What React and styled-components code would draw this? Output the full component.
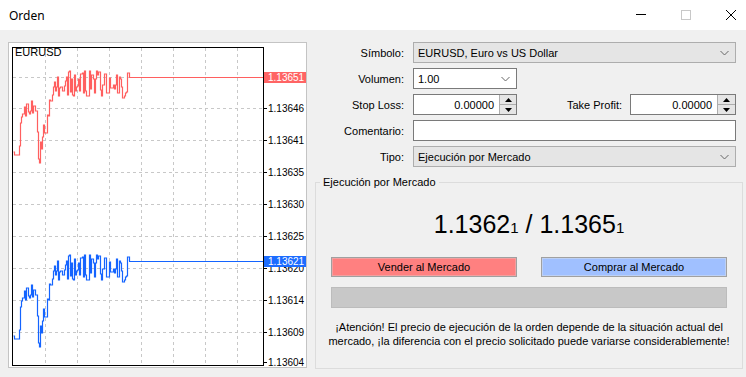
import React from 'react';
import styled, { createGlobalStyle } from 'styled-components';

const GlobalStyle = createGlobalStyle`
  html, body {
    margin: 0;
    padding: 0;
    background: #f0f0f0;
  }
  body {
    font-family: "Liberation Sans", Arial, sans-serif;
    font-size: 11px;
    color: #000;
  }
`;

const Window = styled.div`
  width: 746px;
  height: 377px;
  background: #f0f0f0;
  display: flex;
  flex-direction: column;
  overflow: hidden;
`;

const TitleBar = styled.div`
  height: 30px;
  flex: none;
  background: #fff;
  display: flex;
  align-items: center;
  padding: 0 10px 0 9px;
`;

const Title = styled.div`
  flex: 1;
  font-family: "Noto Sans", "Open Sans", sans-serif;
  font-size: 12px;
`;

const Caption = styled.div`
  display: flex;
  align-items: center;
  gap: 35px;
`;

const Body = styled.div`
  display: flex;
  gap: 8px;
  padding: 12px 3px 0 8px;
`;

const ChartPanel = styled.div`
  width: 297px;
  height: 324px;
  flex: none;
  background: #fff;
  border: 1px solid #c4c4c4;
  svg {
    display: block;
  }
`;

const Side = styled.div`
  width: 428px;
  display: flex;
  flex-direction: column;
`;

const Form = styled.div`
  display: grid;
  grid-template-columns: 89px 1fr;
  grid-auto-rows: 21px;
  column-gap: 9px;
  row-gap: 5px;
  padding-right: 7px;
`;

const Label = styled.div`
  display: flex;
  align-items: center;
  justify-content: flex-end;
  width: ${(p) => (p.$w ? `${p.$w}px` : 'auto')};
  flex: none;
`;

const Select = styled.div`
  display: flex;
  align-items: center;
  box-sizing: border-box;
  height: 21px;
  width: ${(p) => (p.$w ? `${p.$w}px` : '100%')};
  padding: 0 6px 0 4px;
  background: ${(p) => (p.$white ? '#fff' : '#e5e5e5')};
  border: 1px solid ${(p) => (p.$white ? '#7a7a7a' : '#adadad')};
  span {
    flex: 1;
  }
`;

const TextBox = styled.div`
  box-sizing: border-box;
  height: 21px;
  background: #fff;
  border: 1px solid #7a7a7a;
`;

const Pair = styled.div`
  display: flex;
  align-items: center;
`;

const Spin = styled.div`
  display: flex;
  box-sizing: border-box;
  height: 21px;
  width: ${(p) => (p.$w ? `${p.$w}px` : 'auto')};
  flex: ${(p) => (p.$w ? 'none' : '1')};
  background: #fff;
  border: 1px solid #7a7a7a;
  margin-left: ${(p) => p.$ml || 0}px;
`;

const SpinValue = styled.div`
  flex: 1;
  display: flex;
  align-items: center;
  justify-content: flex-end;
  padding-right: 5px;
`;

const SpinButtons = styled.div`
  width: ${(p) => p.$w}px;
  display: flex;
  flex-direction: column;
  border-left: 1px solid #adadad;
  background: #e5e5e5;
`;

const SpinHalf = styled.div`
  flex: 1;
  display: flex;
  align-items: center;
  justify-content: center;
  border-top: ${(p) => (p.$bottom ? '1px solid #adadad' : 'none')};
`;

const Group = styled.fieldset`
  margin: 9px 0 0 0;
  padding: 0 0 20px 0;
  border: 1px solid #dcdcdc;
  display: flex;
  flex-direction: column;
  align-items: stretch;
`;

const Legend = styled.legend`
  margin-left: 4px;
  padding: 0 3px;
  line-height: 13px;
`;

const Price = styled.div`
  margin-top: 20px;
  height: 30px;
  line-height: 30px;
  text-align: center;
  font-size: 25px;
  small {
    font-size: 15px;
  }
`;

const Buttons = styled.div`
  display: flex;
  justify-content: space-between;
  margin: 18px 15px 0;
`;

const MarketButton = styled.div`
  width: 186px;
  height: 20px;
  box-sizing: border-box;
  display: flex;
  align-items: center;
  justify-content: center;
  background: ${(p) => (p.$buy ? '#a0c0ff' : '#ff8080')};
  border: 1px solid #a0a0a0;
  box-shadow: inset 0 0 0 1px ${(p) => (p.$buy ? '#bcd0f5' : '#f2a0a0')};
`;

const Progress = styled.div`
  height: 21px;
  box-sizing: border-box;
  margin: 10px 15px 0;
  background: #c8c8c8;
  border: 1px solid #bcbcbc;
`;

const Warning = styled.div`
  margin-top: 12px;
  text-align: center;
  line-height: 14px;
`;

const Chevron = () => (
  <svg width="9" height="6" viewBox="0 0 9 6">
    <polyline points="0.5,1 4.5,5 8.5,1" fill="none" stroke="#666" strokeWidth="1" />
  </svg>
);

const Arrow = ({ down }) => (
  <svg width="7" height="4" viewBox="0 0 7 4">
    <polygon points={down ? '0,0 7,0 3.5,4' : '0,4 7,4 3.5,0'} fill="#000" />
  </svg>
);

function SpinBox({ w, btn, ml }) {
  return (
    <Spin $w={w} $ml={ml}>
      <SpinValue>0.00000</SpinValue>
      <SpinButtons $w={btn}>
        <SpinHalf>
          <Arrow />
        </SpinHalf>
        <SpinHalf $bottom>
          <Arrow down />
        </SpinHalf>
      </SpinButtons>
    </Spin>
  );
}

// tick line: values hop inside a band that follows the trend, drawn as steps.
// each key is [x, top of band, bottom of band]; the bid line reuses it lower down
function buildSeries() {
  const keys = [
    [13, 150, 163], [18, 148, 163], [20, 118, 135], [23, 100, 120], [27, 100, 124],
    [31, 97, 112], [35, 100, 118], [37, 120, 162], [39, 145, 163], [41, 126, 152],
    [44, 116, 136], [47, 100, 132], [50, 98, 108], [52, 72, 98], [56, 66, 98], [129, 64, 98],
  ];
  let seed = 41;
  const rnd = () => {
    seed = (seed * 16807) % 2147483647;
    return seed / 2147483647;
  };
  const pts = [[13, 152]];
  let prev = 152;
  for (let x = 14; x <= 128; x++) {
    let k = 0;
    while (k < keys.length - 2 && keys[k + 1][0] < x) k++;
    const [x0, t0, b0] = keys[k];
    const [x1, t1, b1] = keys[k + 1];
    const f = (x - x0) / (x1 - x0);
    const top = t0 + (t1 - t0) * f;
    const bot = b0 + (b1 - b0) * f;
    let y = prev;
    if (rnd() < 0.8 || y < top || y > bot) {
      const r = x >= 52 ? 0.15 + rnd() * 0.85 : rnd();
      y = Math.round(top + (bot - top) * r);
    }
    pts.push([x, prev], [x, y]);
    prev = y;
  }
  pts.push([129, prev], [129, 77]);
  return pts;
}

const series = buildSeries();
const toPoints = (dy) => series.map(([x, y]) => `${x + 0.5},${y + dy}`).join(' ');

const gridY = [77, 108, 140, 172, 204, 236, 268, 300, 332];
const gridX = [45, 77, 109, 141, 173, 205, 237];
const axis = [
  [108, '1.13646'], [140, '1.13641'], [172, '1.13635'], [204, '1.13630'],
  [236, '1.13625'], [268, '1.13620'], [300, '1.13614'], [332, '1.13609'], [362, '1.13604'],
];

function Chart() {
  return (
    <svg width="297" height="324" viewBox="9 43 297 324" fontFamily="Liberation Sans, Arial, sans-serif">
      {gridY.map((y) => (
        <line key={`h${y}`} x1="13" x2="263" y1={y + 0.5} y2={y + 0.5} stroke="#c8c8c8" strokeDasharray="3 3" />
      ))}
      {gridX.map((x) => (
        <line key={`v${x}`} x1={x + 0.5} x2={x + 0.5} y1="48" y2="365" stroke="#c8c8c8" strokeDasharray="3 3" />
      ))}
      <rect x="12.5" y="47.5" width="251" height="318" fill="none" stroke="#000" />
      {axis.map(([y, t]) => (
        <g key={t}>
          <line x1="263" x2="267" y1={y + 0.5} y2={y + 0.5} stroke="#000" />
          <text x="268" y={y + 4} fontSize="10" fill="#000">{t}</text>
        </g>
      ))}
      <text x="15" y="56" fontSize="11" fill="#000">EURUSD</text>

      <polyline points={toPoints(0)} fill="none" stroke="#ff5f5f" strokeWidth="1.2" />
      <line x1="129" x2="263" y1="77.5" y2="77.5" stroke="#ff5f5f" />
      <rect x="264" y="72" width="42" height="11" fill="#ff6464" />
      <text x="268" y="81" fontSize="10" fill="#fff">1.13651</text>

      <polyline points={toPoints(184)} fill="none" stroke="#1464ff" strokeWidth="1.2" />
      <line x1="129" x2="263" y1="261.5" y2="261.5" stroke="#1464ff" />
      <rect x="264" y="256" width="42" height="11" fill="#1c6cff" />
      <text x="268" y="265" fontSize="10" fill="#fff">1.13621</text>
    </svg>
  );
}

export default function App() {
  return (
    <Window>
      <GlobalStyle />
      <TitleBar>
        <Title>Orden</Title>
        <Caption>
          <svg width="10" height="10" viewBox="0 0 10 10">
            <line x1="0" x2="10" y1="4.5" y2="4.5" stroke="#000" />
          </svg>
          <svg width="10" height="10" viewBox="0 0 10 10">
            <rect x="0.5" y="0.5" width="9" height="9" fill="none" stroke="#c8c8c8" />
          </svg>
          <svg width="10" height="10" viewBox="0 0 10 10">
            <path d="M0 0 L10 10 M10 0 L0 10" stroke="#000" strokeWidth="1" />
          </svg>
        </Caption>
      </TitleBar>

      <Body>
        <ChartPanel>
          <Chart />
        </ChartPanel>

        <Side>
          <Form>
            <Label>Símbolo:</Label>
            <Select>
              <span>EURUSD, Euro vs US Dollar</span>
              <Chevron />
            </Select>

            <Label>Volumen:</Label>
            <Select $white $w={104}>
              <span>1.00</span>
              <Chevron />
            </Select>

            <Label>Stop Loss:</Label>
            <Pair>
              <SpinBox w={104} btn={16} />
              <Label $w={105}>Take Profit:</Label>
              <SpinBox btn={17} ml={8} />
            </Pair>

            <Label>Comentario:</Label>
            <TextBox />

            <Label>Tipo:</Label>
            <Select>
              <span>Ejecución por Mercado</span>
              <Chevron />
            </Select>
          </Form>

          <Group>
            <Legend>Ejecución por Mercado</Legend>
            <Price>
              1.1362<small>1</small> / 1.1365<small>1</small>
            </Price>
            <Buttons>
              <MarketButton>Vender al Mercado</MarketButton>
              <MarketButton $buy>Comprar al Mercado</MarketButton>
            </Buttons>
            <Progress />
            <Warning>
              ¡Atención! El precio de ejecución de la orden depende de la situación actual del
              <br />
              mercado, ¡la diferencia con el precio solicitado puede variarse considerablemente!
            </Warning>
          </Group>
        </Side>
      </Body>
    </Window>
  );
}
